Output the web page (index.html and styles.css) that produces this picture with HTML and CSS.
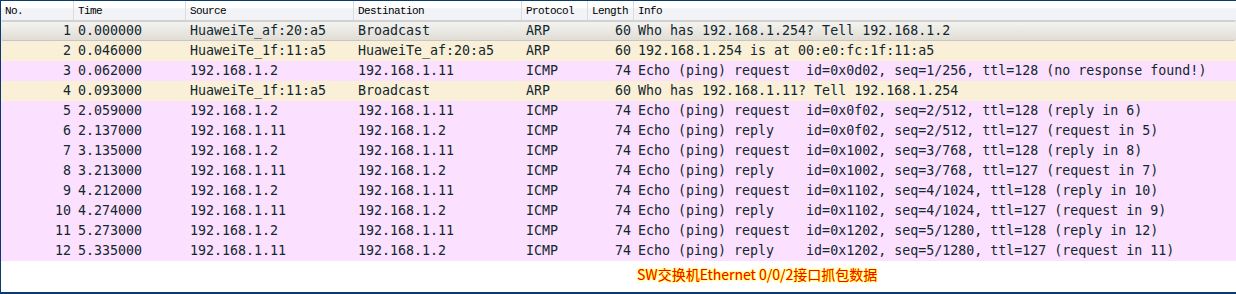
FILE: index.html
```html
<!DOCTYPE html>
<html lang="zh-CN">
<head>
    <meta charset="UTF-8">
    <title>Packet List</title>
    <link rel="stylesheet" href="styles.css">
</head>
<body>
    <div class="frame">
        <div class="row head">
            <div class="cell">No.</div>
            <div class="cell">Time</div>
            <div class="cell">Source</div>
            <div class="cell">Destination</div>
            <div class="cell">Protocol</div>
            <div class="cell">Length</div>
            <div class="cell">Info</div>
        </div>

        <div class="row arp selected">
            <div class="cell num">1</div><div class="cell">0.000000</div><div class="cell">HuaweiTe_af:20:a5</div><div class="cell">Broadcast</div><div class="cell">ARP</div><div class="cell num">60</div><div class="cell info">Who has 192.168.1.254? Tell 192.168.1.2</div>
        </div>
        <div class="row arp">
            <div class="cell num">2</div><div class="cell">0.046000</div><div class="cell">HuaweiTe_1f:11:a5</div><div class="cell">HuaweiTe_af:20:a5</div><div class="cell">ARP</div><div class="cell num">60</div><div class="cell info">192.168.1.254 is at 00:e0:fc:1f:11:a5</div>
        </div>
        <div class="row icmp">
            <div class="cell num">3</div><div class="cell">0.062000</div><div class="cell">192.168.1.2</div><div class="cell">192.168.1.11</div><div class="cell">ICMP</div><div class="cell num">74</div><div class="cell info">Echo (ping) request  id=0x0d02, seq=1/256, ttl=128 (no response found!)</div>
        </div>
        <div class="row arp">
            <div class="cell num">4</div><div class="cell">0.093000</div><div class="cell">HuaweiTe_1f:11:a5</div><div class="cell">Broadcast</div><div class="cell">ARP</div><div class="cell num">60</div><div class="cell info">Who has 192.168.1.11? Tell 192.168.1.254</div>
        </div>
        <div class="row icmp">
            <div class="cell num">5</div><div class="cell">2.059000</div><div class="cell">192.168.1.2</div><div class="cell">192.168.1.11</div><div class="cell">ICMP</div><div class="cell num">74</div><div class="cell info">Echo (ping) request  id=0x0f02, seq=2/512, ttl=128 (reply in 6)</div>
        </div>
        <div class="row icmp">
            <div class="cell num">6</div><div class="cell">2.137000</div><div class="cell">192.168.1.11</div><div class="cell">192.168.1.2</div><div class="cell">ICMP</div><div class="cell num">74</div><div class="cell info">Echo (ping) reply    id=0x0f02, seq=2/512, ttl=127 (request in 5)</div>
        </div>
        <div class="row icmp">
            <div class="cell num">7</div><div class="cell">3.135000</div><div class="cell">192.168.1.2</div><div class="cell">192.168.1.11</div><div class="cell">ICMP</div><div class="cell num">74</div><div class="cell info">Echo (ping) request  id=0x1002, seq=3/768, ttl=128 (reply in 8)</div>
        </div>
        <div class="row icmp">
            <div class="cell num">8</div><div class="cell">3.213000</div><div class="cell">192.168.1.11</div><div class="cell">192.168.1.2</div><div class="cell">ICMP</div><div class="cell num">74</div><div class="cell info">Echo (ping) reply    id=0x1002, seq=3/768, ttl=127 (request in 7)</div>
        </div>
        <div class="row icmp">
            <div class="cell num">9</div><div class="cell">4.212000</div><div class="cell">192.168.1.2</div><div class="cell">192.168.1.11</div><div class="cell">ICMP</div><div class="cell num">74</div><div class="cell info">Echo (ping) request  id=0x1102, seq=4/1024, ttl=128 (reply in 10)</div>
        </div>
        <div class="row icmp">
            <div class="cell num">10</div><div class="cell">4.274000</div><div class="cell">192.168.1.11</div><div class="cell">192.168.1.2</div><div class="cell">ICMP</div><div class="cell num">74</div><div class="cell info">Echo (ping) reply    id=0x1102, seq=4/1024, ttl=127 (request in 9)</div>
        </div>
        <div class="row icmp">
            <div class="cell num">11</div><div class="cell">5.273000</div><div class="cell">192.168.1.2</div><div class="cell">192.168.1.11</div><div class="cell">ICMP</div><div class="cell num">74</div><div class="cell info">Echo (ping) request  id=0x1202, seq=5/1280, ttl=128 (reply in 12)</div>
        </div>
        <div class="row icmp">
            <div class="cell num">12</div><div class="cell">5.335000</div><div class="cell">192.168.1.11</div><div class="cell">192.168.1.2</div><div class="cell">ICMP</div><div class="cell num">74</div><div class="cell info">Echo (ping) reply    id=0x1202, seq=5/1280, ttl=127 (request in 11)</div>
        </div>

        <div class="caption">SW交换机Ethernet 0/0/2接口抓包数据</div>
    </div>
</body>
</html>
```

FILE: styles.css
```css
html, body {
    margin: 0;
    padding: 0;
    background: #ffffff;
}
.frame {
    box-sizing: border-box;
    width: 1236px;
    height: 294px;
    border-top: 1px solid #0b3a6e;
    border-left: 1px solid #0b3a6e;
    border-bottom: 2px solid #0b3a6e;
    display: flex;
    flex-direction: column;
}
.row {
    box-sizing: border-box;
    display: grid;
    grid-template-columns: 73px 112px 168px 168px 66px 46px 1fr;
    height: 20px;
    align-items: center;
    font-family: "DejaVu Sans Mono", monospace;
    font-size: 13.3px;
    line-height: 18px;
    color: #12272e;
}
.cell {
    padding-left: 4px;
    white-space: pre;
}
.cell.num {
    text-align: right;
    padding-left: 0;
    padding-right: 3px;
}
.head {
    height: 20px;
    align-items: stretch;
    background: linear-gradient(to bottom, #ffffff 0, #ffffff 38%, #f2f3f6 40%, #f2f3f6 100%);
    border-bottom: 1px solid #d4d4d4;
    font-family: "Liberation Mono", monospace;
    font-size: 11px;
    letter-spacing: -0.6px;
    color: #000000;
}
.head .cell {
    border-right: 1px solid #dcdcdc;
    display: flex;
    align-items: center;
    padding-left: 4px;
}
.head .cell:last-child {
    border-right: none;
}
.arp {
    background: #faf0d7;
}
.icmp {
    background: #fce0ff;
}
.selected {
    background: linear-gradient(to bottom, #f4f3ef, #e0ddd6);
    border-top: 1px solid #cfcfcf;
    border-bottom: 1px solid #c6c6c6;
    border-radius: 2px;
}
.caption {
    flex: 1;
    padding: 4px 0 0 636px;
    font-family: "Noto Sans CJK SC", "Noto Sans", sans-serif;
    font-size: 14px;
    line-height: 18px;
    color: #ff0000;
    text-shadow: 0 0 2px #ffff00, 0 0 2px #ffff00, 0 0 1px #ffff00;
}
```
